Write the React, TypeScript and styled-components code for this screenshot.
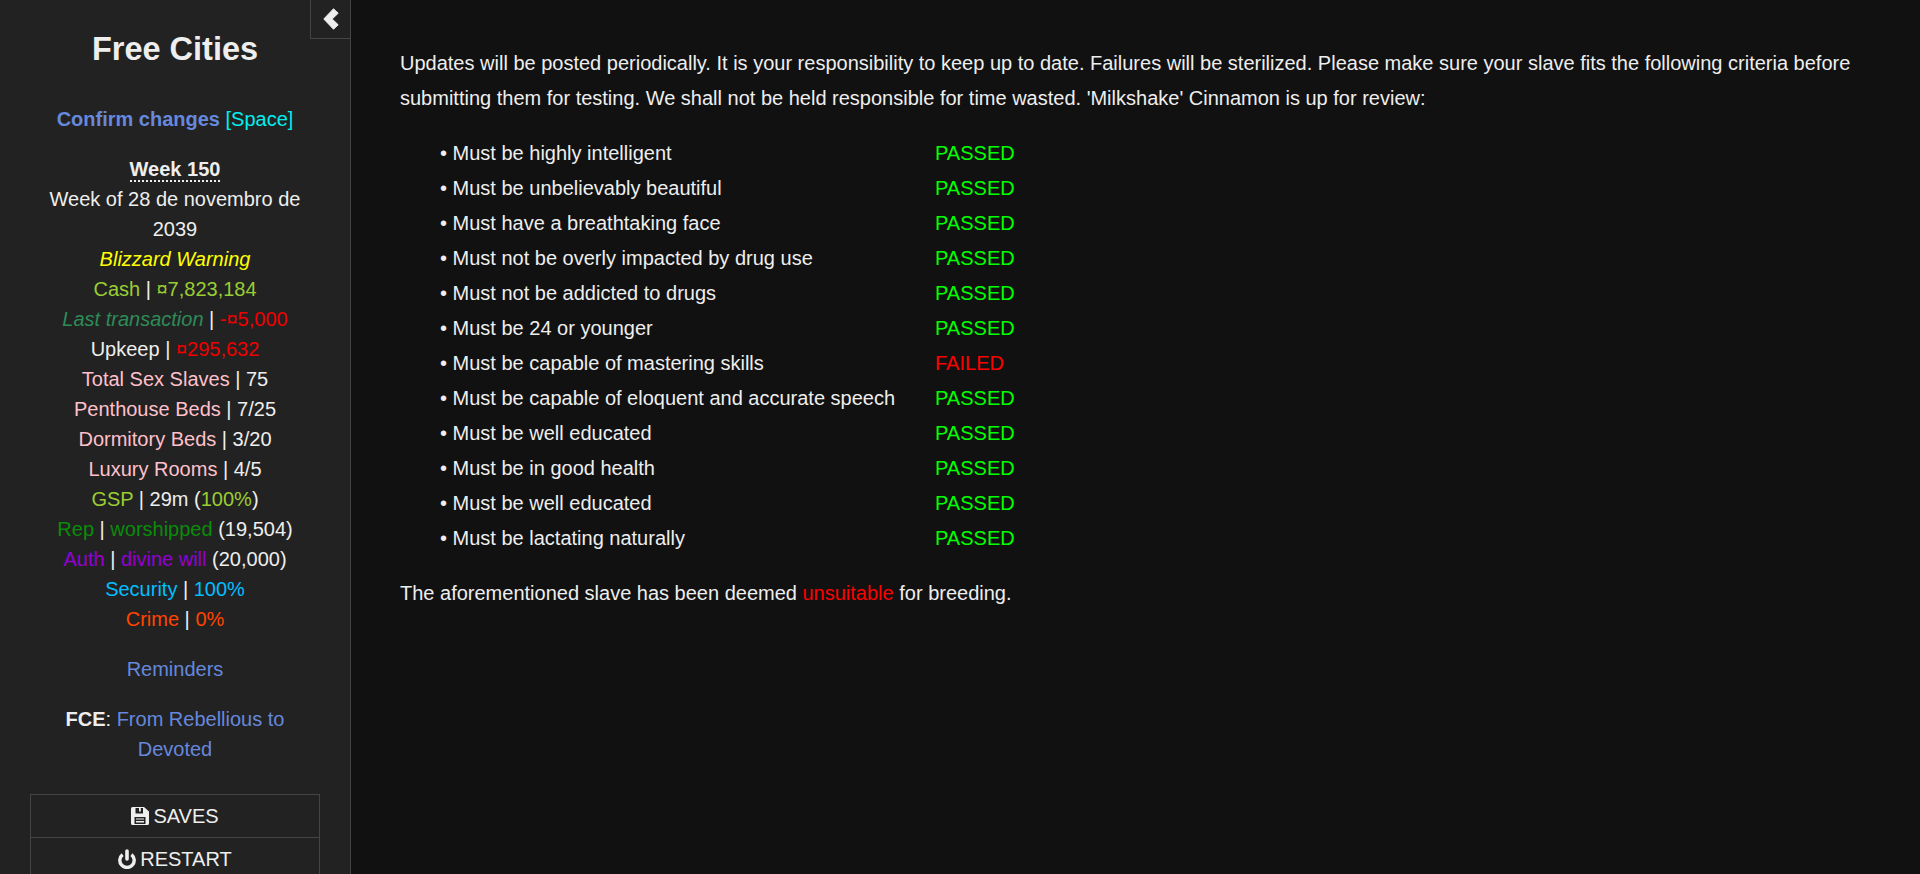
import React from 'react'
import styled, { createGlobalStyle } from 'styled-components'

const GlobalStyle = createGlobalStyle`
  html, body {
    margin: 0;
    height: 100%;
    overflow: hidden;
    background: #111;
    color: #eee;
    font: 20px/1.5 "Liberation Sans", Arial, sans-serif;
  }
`

const Page = styled.div`
  display: flex;
  height: 874px;
  overflow: hidden;
`

const Sidebar = styled.aside`
  position: relative;
  flex: 0 0 351px;
  box-sizing: border-box;
  height: 874px;
  overflow: hidden;
  background: #222;
  border-right: 1px solid #444;
  padding: 0 30px;
  text-align: center;
`

const Toggle = styled.button`
  position: absolute;
  top: 0;
  right: 0;
  width: 40px;
  height: 39px;
  padding: 0;
  display: flex;
  align-items: center;
  justify-content: center;
  background: #222;
  color: #eee;
  border: solid #444;
  border-width: 0 0 1px 1px;
`

const Title = styled.h1`
  margin: 0;
  padding-top: 25px;
  font-size: 32.5px;
  line-height: 48px;
  font-weight: 700;
`

const Confirm = styled.div`
  margin-top: 31px;
`

const Stats = styled.div`
  margin-top: 20px;
`

const Block = styled.div`
  margin-top: 20px;
`

const Link = styled.a`
  color: #68d;
  text-decoration: none;
`

const Week = styled.span`
  font-weight: 700;
  border-bottom: 2px dotted #eee;
`

const Tone = styled.span<{ $color: string; $italic?: boolean }>`
  color: ${({ $color }) => $color};
  font-style: ${({ $italic }) => ($italic ? 'italic' : 'normal')};
`

const MenuList = styled.div`
  margin-top: 30px;
  border: 1px solid #444;
`

const MenuItem = styled.div`
  display: flex;
  align-items: center;
  justify-content: center;
  gap: 4px;
  height: 42px;
  border-top: 1px solid #444;

  &:first-child {
    border-top: none;
  }
`

const Main = styled.main`
  flex: 1;
  padding: 46px 50px 0 49px;
  line-height: 35px;
`

const Paragraph = styled.p`
  margin: 0;
`

const Criteria = styled.div`
  margin: 20px 0;
  padding-left: 40px;
`

const Row = styled.div`
  display: grid;
  grid-template-columns: 495px auto;
`

const Result = styled.span<{ $passed: boolean }>`
  color: ${({ $passed }) => ($passed ? '#0f0' : '#f00')};
`

const ChevronIcon = () => (
  <svg width="16" height="22" viewBox="0 0 16 22">
    <path
      fill="currentColor"
      stroke="currentColor"
      strokeWidth="1"
      strokeLinejoin="round"
      d="M10.5.8 15.2 5.2 9.2 11l6 5.8-4.7 4.4L.8 11z"
    />
  </svg>
)

const SaveIcon = () => (
  <svg width="18" height="18" viewBox="0 0 18 18">
    <path
      fill="currentColor"
      fillRule="evenodd"
      d="M1.5 0H13l5 4.5v12a1.5 1.5 0 0 1-1.5 1.5h-15A1.5 1.5 0 0 1 0 16.5v-15A1.5 1.5 0 0 1 1.5 0zM4.5 1v5.5h7.5V1H9.8v3.5H8V1zM3.5 10v7h11v-7zM5 11.5h8v1H5zM5 14h8v1.5H5z"
    />
  </svg>
)

const PowerIcon = () => (
  <svg width="18" height="20" viewBox="0 0 18 20">
    <path fill="none" stroke="currentColor" strokeWidth="3.4" d="M4.6 5.6a7.2 7.2 0 1 0 8.8 0" />
    <path fill="none" stroke="currentColor" strokeWidth="3.6" strokeLinecap="round" d="M9 2v8" />
  </svg>
)

const criteria: [string, boolean][] = [
  ['Must be highly intelligent', true],
  ['Must be unbelievably beautiful', true],
  ['Must have a breathtaking face', true],
  ['Must not be overly impacted by drug use', true],
  ['Must not be addicted to drugs', true],
  ['Must be 24 or younger', true],
  ['Must be capable of mastering skills', false],
  ['Must be capable of eloquent and accurate speech', true],
  ['Must be well educated', true],
  ['Must be in good health', true],
  ['Must be well educated', true],
  ['Must be lactating naturally', true],
]

const App = () => {
  return (
    <Page>
      <GlobalStyle />
      <Sidebar>
        <Toggle>
          <ChevronIcon />
        </Toggle>
        <Title>Free Cities</Title>
        <Confirm>
          <Link href="#"><b>Confirm changes</b></Link> <Tone $color="#0ee">[Space]</Tone>
        </Confirm>
        <Stats>
          <div><Week>Week 150</Week></div>
          <div>Week of 28 de novembro de 2039</div>
          <div><Tone $color="#ff0" $italic>Blizzard Warning</Tone></div>
          <div><Tone $color="#9acd32">Cash</Tone> | <Tone $color="#9acd32">¤7,823,184</Tone></div>
          <div><Tone $color="#2e8b57" $italic>Last transaction</Tone> | <Tone $color="#e00">-¤5,000</Tone></div>
          <div>Upkeep | <Tone $color="#e00">¤295,632</Tone></div>
          <div><Tone $color="#ffc0cb">Total Sex Slaves</Tone> | 75</div>
          <div><Tone $color="#ffc0cb">Penthouse Beds</Tone> | 7/25</div>
          <div><Tone $color="#ffc0cb">Dormitory Beds</Tone> | 3/20</div>
          <div><Tone $color="#ffc0cb">Luxury Rooms</Tone> | 4/5</div>
          <div><Tone $color="#9acd32">GSP</Tone> | 29m (<Tone $color="#9acd32">100%</Tone>)</div>
          <div><Tone $color="#0a8c0a">Rep</Tone> | <Tone $color="#0a8c0a">worshipped</Tone> (19,504)</div>
          <div><Tone $color="#9400d3">Auth</Tone> | <Tone $color="#9400d3">divine will</Tone> (20,000)</div>
          <div><Tone $color="#00bfff">Security</Tone> | <Tone $color="#00bfff">100%</Tone></div>
          <div><Tone $color="#ff4500">Crime</Tone> | <Tone $color="#ff4500">0%</Tone></div>
        </Stats>
        <Block><Link href="#">Reminders</Link></Block>
        <Block><b>FCE</b>: <Link href="#">From Rebellious to Devoted</Link></Block>
        <MenuList>
          <MenuItem><SaveIcon /> SAVES</MenuItem>
          <MenuItem><PowerIcon /> RESTART</MenuItem>
        </MenuList>
      </Sidebar>
      <Main>
        <Paragraph>
          Updates will be posted periodically. It is your responsibility to keep up to date. Failures will be sterilized. Please make sure your slave fits the following criteria before submitting them for testing. We shall not be held responsible for time wasted. 'Milkshake' Cinnamon is up for review:
        </Paragraph>
        <Criteria>
          {criteria.map(([label, passed], i) => (
            <Row key={i}>
              <span>• {label}</span>
              <Result $passed={passed}>{passed ? 'PASSED' : 'FAILED'}</Result>
            </Row>
          ))}
        </Criteria>
        <Paragraph>
          The aforementioned slave has been deemed <Tone $color="#f00">unsuitable</Tone> for breeding.
        </Paragraph>
      </Main>
    </Page>
  )
}

export default App
